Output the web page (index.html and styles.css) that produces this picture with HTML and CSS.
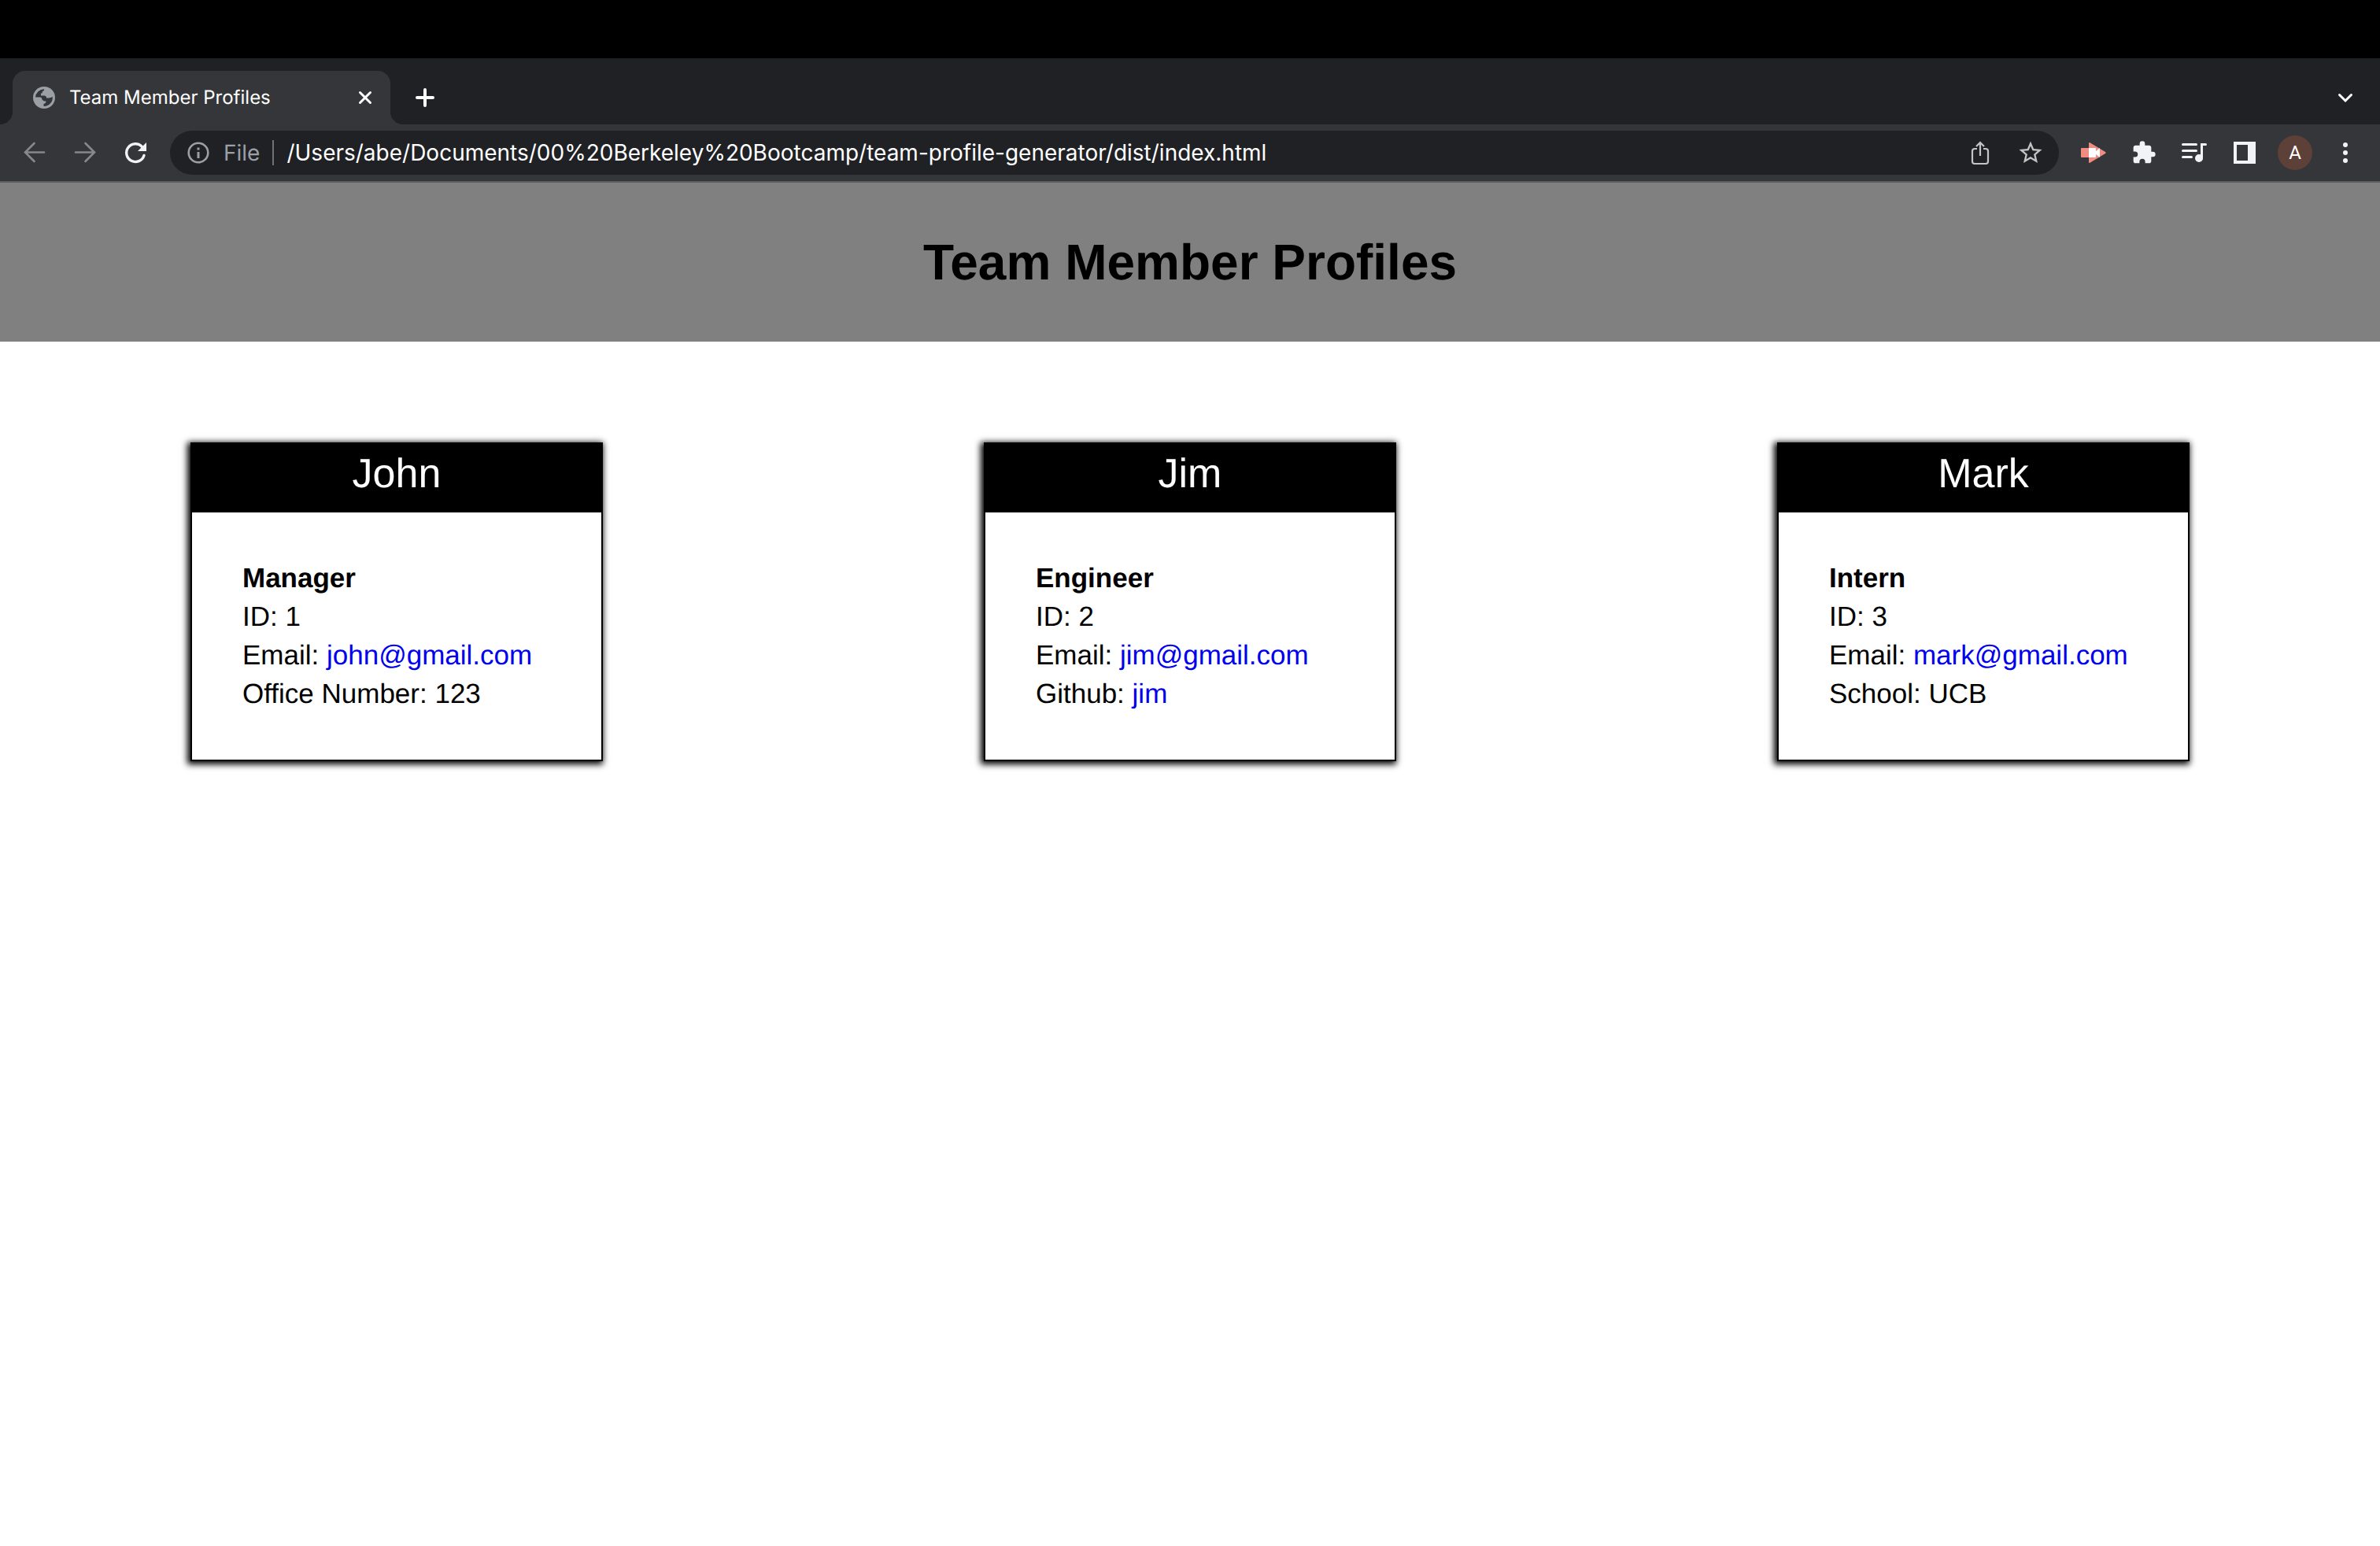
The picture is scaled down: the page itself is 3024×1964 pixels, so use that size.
FILE: index.html
```html
<!DOCTYPE html>
<html lang="en">
<head>
<meta charset="utf-8">
<title>Team Member Profiles</title>
<link rel="stylesheet" href="styles.css">
</head>
<body>
<div class="browser">
  <div class="tab-strip">
    <div class="tab">
      <svg class="icon-32" viewBox="0 0 32 32"><circle cx="16" cy="16" r="14" fill="#9aa0a6"/><path fill="#35363a" d="M5 15.500A11 11 0 0 1 16 5.200V7q-2.500.5-2.500 3.500h-1.500v3h4q3 0 3 3h3q2.500-.2 4.800-1.500a11 11 0 0 1-11.300 12v-3q3-.5 3-3.500h-2.500q-2.500-.5-3-3.500 0-1.500-2-1.500z"/></svg>
      <span class="tab-title">Team Member Profiles</span>
      <button class="icon-button tab-close" aria-label="Close tab"><svg class="icon-20" viewBox="0 0 20 20"><path d="M3.500 3.500l13 13M16.500 3.500l-13 13" stroke="#fff" stroke-width="3" stroke-linecap="round"/></svg></button>
    </div>
    <button class="icon-button" aria-label="New tab"><svg class="icon-24" viewBox="0 0 24 24"><path d="M12 2v20M2 12h20" stroke="#fff" stroke-width="4" stroke-linecap="round"/></svg></button>
    <button class="icon-button tab-search" aria-label="Search tabs"><svg class="icon-20" viewBox="0 0 20 20"><path d="M2.500 6.500L10 14l7.500-7.500" fill="none" stroke="#fff" stroke-width="3" stroke-linecap="round"/></svg></button>
  </div>
  <div class="toolbar">
    <div class="nav">
      <button class="icon-button" aria-label="Back"><svg class="icon-32" viewBox="0 0 32 32"><path d="M28 15.500H4.500M15.500 4L4 15.500 15.500 27" fill="none" stroke="#87888a" stroke-width="2.600" stroke-linecap="round"/></svg></button>
      <button class="icon-button" aria-label="Forward"><svg class="icon-32" viewBox="0 0 32 32"><path d="M4 15.500h23.500M16.500 4L28 15.500 16.500 27" fill="none" stroke="#87888a" stroke-width="2.600" stroke-linecap="round"/></svg></button>
      <button class="icon-button" aria-label="Reload"><svg class="icon-32" viewBox="0 0 32 32"><path d="M27 19.500A11.400 11.400 0 1 1 24.500 8.500" fill="none" stroke="#f1f3f4" stroke-width="3.400" stroke-linecap="round"/><path d="M30 3v11H19z" fill="#f1f3f4"/></svg></button>
    </div>
    <div class="omnibox">
      <svg class="icon-28" viewBox="0 0 28 28"><circle cx="14" cy="14" r="12.300" fill="none" stroke="#9aa0a6" stroke-width="2.600"/><path d="M14 13v8M14 7.500v3" stroke="#9aa0a6" stroke-width="3"/></svg>
      <span class="scheme">File</span>
      <input class="address" type="text" aria-label="Address" value="/Users/abe/Documents/00%20Berkeley%20Bootcamp/team-profile-generator/dist/index.html">
      <button class="icon-button" aria-label="Share"><svg class="icon-32" viewBox="0 0 32 32"><path d="M12 11H9a3 3 0 0 0-3 3v13a3 3 0 0 0 3 3h14a3 3 0 0 0 3-3V14a3 3 0 0 0-3-3h-3M16 20V4M11 8l5-5 5 5" fill="none" stroke="#c4c4c5" stroke-width="2.200"/></svg></button>
      <button class="icon-button" aria-label="Bookmark"><svg class="icon-32" viewBox="1 1 22 22"><path fill="#c4c4c5" d="M22 9.240l-7.190-.62L12 2 9.190 8.630 2 9.240l5.460 4.730L5.820 21 12 17.270 18.180 21l-1.630-7.030L22 9.240zM12 15.400l-3.760 2.270 1-4.280-3.320-2.880 4.380-.38L12 6.100l1.710 4.040 4.380.38-3.320 2.880 1 4.280L12 15.400z"/></svg></button>
    </div>
    <div class="actions">
      <button class="icon-button" aria-label="Screen recorder"><svg class="icon-32" viewBox="0 0 32 32"><path d="M1 10h9V4q0-1.500 1.500-.8L31 15q1.500 1 0 2L11.500 28.800Q10 29.500 10 28v-6H1q-1 0-1-1V11q0-1 1-1z" fill="#f28b82"/><path d="M10 10h8q1 0 1 1v3l5-4v12l-5-4v3q0 1-1 1h-8z" fill="#fff"/></svg></button>
      <button class="icon-button" aria-label="Extensions"><svg class="icon-32" viewBox="0 0 24 24"><path fill="#f1f3f4" d="M20.500 11H19V7c0-1.100-.9-2-2-2h-4V3.500a2.500 2.500 0 0 0-5 0V5H4c-1.100 0-2 .9-2 2v3.800h1.500a2.700 2.700 0 0 1 0 5.400H2V20c0 1.100.9 2 2 2h3.800v-1.500a2.700 2.700 0 0 1 5.400 0V22H17c1.100 0 2-.9 2-2v-4h1.500a2.500 2.500 0 0 0 0-5z"/></svg></button>
      <button class="icon-button" aria-label="Media controls"><svg class="icon-32" viewBox="0 0 32 32"><path d="M1.500 5.500h17M1.500 13.500h17M1.500 21.500h11" stroke="#f1f3f4" stroke-width="3" stroke-linecap="round"/><circle cx="22" cy="23" r="5" fill="#f1f3f4"/><path d="M25.500 23V5.500h5" fill="none" stroke="#f1f3f4" stroke-width="3" stroke-linecap="round"/></svg></button>
      <button class="icon-button" aria-label="Side panel"><svg class="icon-32" viewBox="0 0 32 32"><path fill="#f1f3f4" fill-rule="evenodd" d="M2 2h28v28H2zM6 6v20h14V6z"/></svg></button>
      <button class="icon-button avatar" aria-label="Profile">A</button>
      <button class="icon-button" aria-label="Menu"><svg class="icon-32" viewBox="0 0 32 32"><g fill="#f1f3f4"><circle cx="16" cy="6" r="3"/><circle cx="16" cy="16" r="3"/><circle cx="16" cy="26" r="3"/></g></svg></button>
    </div>
  </div>
</div>
<header class="page-header">
  <h1>Team Member Profiles</h1>
</header>
<main class="team">
  <article class="card">
    <h2>John</h2>
    <ul>
      <li class="role">Manager</li>
      <li>ID: 1</li>
      <li>Email: <a href="mailto:john@gmail.com">john@gmail.com</a></li>
      <li>Office Number: 123</li>
    </ul>
  </article>
  <article class="card">
    <h2>Jim</h2>
    <ul>
      <li class="role">Engineer</li>
      <li>ID: 2</li>
      <li>Email: <a href="mailto:jim@gmail.com">jim@gmail.com</a></li>
      <li>Github: <a href="https://github.com/jim">jim</a></li>
    </ul>
  </article>
  <article class="card">
    <h2>Mark</h2>
    <ul>
      <li class="role">Intern</li>
      <li>ID: 3</li>
      <li>Email: <a href="mailto:mark@gmail.com">mark@gmail.com</a></li>
      <li>School: UCB</li>
    </ul>
  </article>
</main>
</body>
</html>
```
FILE: styles.css
```css
* {
  box-sizing: border-box;
}

body {
  margin: 0;
  background: #fff;
  color: #000;
  font-family: "Liberation Sans", Arial, Helvetica, sans-serif;
  text-rendering: geometricPrecision;
}

svg {
  display: block;
  flex: none;
  overflow: visible;
}

.icon-20 { width: 20px; height: 20px; }
.icon-24 { width: 24px; height: 24px; }
.icon-28 { width: 28px; height: 28px; }
.icon-32 { width: 32px; height: 32px; }

.icon-button {
  display: flex;
  flex: none;
  align-items: center;
  justify-content: center;
  padding: 0;
  border: 0;
  background: none;
}

/* Browser window */
.browser {
  padding-top: 74px;
  border-bottom: 2px solid #5b5c5f;
  background: #000;
  color: #fff;
  font-family: Inter, Roboto, sans-serif;
}

.tab-strip {
  display: flex;
  align-items: center;
  height: 84px;
  padding: 16px 34px 0 16px;
  background: #202124;
}

.tab {
  position: relative;
  display: flex;
  align-items: center;
  width: 480px;
  height: 68px;
  margin-right: 32px;
  padding: 0 22px 0 24px;
  border-radius: 16px 16px 0 0;
  background: #35363a;
}

/* Flared feet where the tab meets the toolbar */
.tab::before,
.tab::after {
  content: "";
  position: absolute;
  bottom: 0;
  width: 16px;
  height: 16px;
}

.tab::before {
  right: 100%;
  background: radial-gradient(circle at 0 0, #202124 16px, #35363a 16px);
}

.tab::after {
  left: 100%;
  background: radial-gradient(circle at 100% 0, #202124 16px, #35363a 16px);
}

.tab-title {
  margin-left: 16px;
  font-size: 24px;
  line-height: 32px;
}

.tab-close,
.tab-search {
  margin-left: auto;
}

.toolbar {
  display: flex;
  align-items: center;
  height: 72px;
  padding: 0 28px;
  background: #35363a;
}

.nav {
  display: flex;
  gap: 32px;
  margin-right: 28px;
}

.omnibox {
  display: flex;
  flex: 1;
  align-items: center;
  height: 56px;
  padding: 0 20px 0 22px;
  border-radius: 28px;
  background: #202124;
  font-size: 28px;
  line-height: 32px;
}

.omnibox .icon-button {
  margin-left: 32px;
}

.scheme {
  margin: 0 16px 0 18px;
  color: #9aa0a6;
}

.address {
  flex: 1;
  height: 32px;
  padding: 0 0 0 16px;
  border: 0;
  border-left: 2px solid #6f7276;
  background: none;
  color: #fff;
  font: inherit;
}

.actions {
  display: flex;
  align-items: center;
  gap: 32px;
  margin-left: 28px;
}

.avatar {
  width: 44px;
  height: 44px;
  margin: 0 -6px;
  border-radius: 50%;
  background: #5d4037;
  color: #fff;
  font: 24px/44px Roboto, sans-serif;
}

/* Team page */
.page-header {
  padding: 64px 32px;
  background: #808080;
  text-align: center;
}

.page-header h1 {
  margin: 0;
  font-size: 64px;
  line-height: 74px;
}

.team {
  display: grid;
  grid-template-columns: repeat(3, 1fr);
  justify-items: center;
  padding: 128px 0;
}

.card {
  width: 524px;
  border: 2px solid #000;
  background: #fff;
  box-shadow: -2px 2px 8px 2px #000;
}

.card h2 {
  margin: 0;
  padding: 8px 0 19px;
  background: #000;
  color: #fff;
  font-size: 52px;
  font-weight: 400;
  line-height: 60px;
  text-align: center;
}

.card ul {
  margin: 0;
  padding: 59px 64px;
  font-size: 35px;
  line-height: 49px;
  list-style: none;
}

.card .role {
  font-weight: 700;
}

.card a {
  color: #0000ee;
  text-decoration: none;
}
```
